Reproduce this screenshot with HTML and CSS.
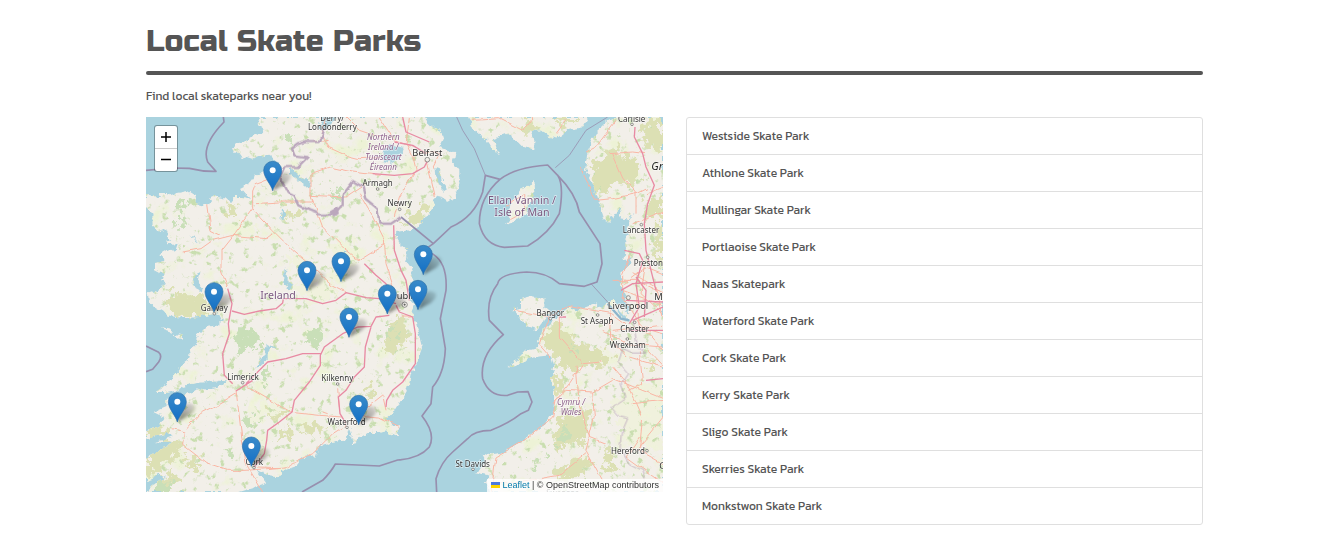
FILE: index.html
```html
<!DOCTYPE html>
<html lang="en">
<head>
<meta charset="utf-8">
<meta name="viewport" content="width=device-width, initial-scale=1">
<title>Local Skate Parks</title>
<link rel="stylesheet" href="styles.css">
</head>
<body>
<main class="page">
  <h1 class="title">Local Skate Parks</h1>
  <hr class="rule">
  <p class="intro">Find local skateparks near you!</p>
  <div class="columns">
    <section class="map" aria-label="Map of skate parks">
      <svg class="map-canvas" viewBox="0 0 1551 1125" preserveAspectRatio="xMidYMid slice">
        <defs>
          <filter id="coast" x="0" y="0" width="1551" height="1125" filterUnits="userSpaceOnUse" color-interpolation-filters="sRGB">
            <feTurbulence type="fractalNoise" baseFrequency="0.05" numOctaves="3" seed="4"/>
            <feDisplacementMap in="SourceGraphic" scale="22" xChannelSelector="R" yChannelSelector="G"/>
          </filter>
          <filter id="wiggle" x="0" y="0" width="1551" height="1125" filterUnits="userSpaceOnUse" color-interpolation-filters="sRGB">
            <feTurbulence type="fractalNoise" baseFrequency="0.025" numOctaves="2" seed="4"/>
            <feDisplacementMap in="SourceGraphic" scale="16" xChannelSelector="R" yChannelSelector="G"/>
          </filter>
          <filter id="rough" x="0" y="0" width="1551" height="1125" filterUnits="userSpaceOnUse" color-interpolation-filters="sRGB">
            <feTurbulence type="fractalNoise" baseFrequency="0.04" numOctaves="4" seed="9"/>
            <feDisplacementMap in="SourceGraphic" scale="75" xChannelSelector="R" yChannelSelector="G"/>
          </filter>
          <filter id="specks" x="0" y="0" width="1551" height="1125" filterUnits="userSpaceOnUse" color-interpolation-filters="sRGB">
            <feTurbulence type="fractalNoise" baseFrequency="0.045" numOctaves="4" seed="12"/>
            <feColorMatrix values="0 0 0 0 .79  0 0 0 0 .87  0 0 0 0 .69  7 0 0 0 -4.3"/>
          </filter>
          <filter id="fields" x="0" y="0" width="1551" height="1125" filterUnits="userSpaceOnUse" color-interpolation-filters="sRGB">
            <feTurbulence type="fractalNoise" baseFrequency="0.016" numOctaves="5" seed="31"/>
            <feColorMatrix values="0 0 0 0 .93  0 0 0 0 .95  0 0 0 0 .84  0 5 0 0 -2.9"/>
          </filter>
          <filter id="blur"><feGaussianBlur stdDeviation="5"/></filter>
          <linearGradient id="pin-fill" x1="0" y1="0" x2="0" y2="1"><stop offset="0" stop-color="#3a8bc9"/><stop offset="1" stop-color="#126fc6"/></linearGradient>
          <linearGradient id="shade" x1="0" y1="1" x2="1" y2="0"><stop offset="0" stop-opacity=".5"/><stop offset="1" stop-opacity=".08"/></linearGradient>
          <g id="pin">
            <path class="pin-shadow" d="M0 0 L14 -42 Q34 -64 52 -50 Q60 -38 38 -20Z"/>
            <path class="pin-body" d="M0 0C-4 -18 -27 -39 -27 -61A27 27 0 0 1 27 -61C27 -39 4 -18 0 0Z"/>
            <circle class="pin-hole" cy="-61" r="9"/>
          </g>
          <g id="land-shapes">
            <path d="M340 0L335 25 355 40 325 55 300 68 275 75 258 95 275 115 300 122 318 128 335 118 362 112 385 125 400 140 385 160 350 165 325 180 310 200 285 213 300 230 315 245 290 240 262 240 255 258 240 245 215 240 200 235 190 262 165 262 150 258 145 235 125 222 95 228 75 238 60 225 40 225 45 245 30 235 0 235V270L20 290 20 325 40 345 60 335 75 375 60 370 70 385 95 380 90 395 70 405 55 400 40 412 60 430 30 438 30 460 50 470 45 490 60 500 35 520 5 530 10 560 35 575 60 590 90 600 120 603 160 600 205 590 235 605 215 625 180 630 160 650 150 680 130 700 135 720 115 735 100 760 85 775 70 795 50 810 25 828 60 828 95 820 120 805 150 798 190 795 215 788 240 790 232 800 215 812 190 818 160 815 140 828 100 840 60 850 62 870 25 885 55 900 40 920 45 930 20 935 0 940V965L60 950 80 958 60 965 20 972 75 975 60 990 10 1015 0 1030V1095L40 1070 60 1080 20 1105 0 1125H280L330 1110 360 1100 345 1080 330 1058 365 1075 400 1078 420 1055 450 1045 470 1020 510 1015 520 985 570 975 600 965 613 950 622 985 640 960 665 945 700 945 720 940 760 958 755 940 760 925 735 925 725 905 740 890 765 850 785 815 795 770 812 735 828 690 815 640 805 600 795 580 805 560 790 545 795 500 800 460 778 430 785 400 760 380 750 345 790 340 830 315 855 280 865 250 885 235 900 258 925 240 940 200 940 160 920 135 925 110 895 95 880 90 890 70 880 40 865 35 845 15 835 0Z"/>
            <path d="M968 0L985 40 1020 70 1035 90 1050 110 1058 108 1050 80 1040 65 1080 50 1110 70 1130 90 1165 97 1165 70 1150 45 1180 40 1200 55 1230 65 1250 50 1270 35 1310 28 1325 0Z"/>
            <path d="M1405 0L1380 15 1345 50 1325 100 1318 155 1345 210 1360 260 1374 300 1365 285 1385 320 1410 285 1430 268 1420 300 1450 305 1462 285 1445 330 1450 350 1435 365 1440 390 1435 430 1460 425 1430 460 1425 510 1440 540 1450 590 1430 570 1400 550 1370 570 1345 560 1290 580 1265 570 1230 600 1190 640 1175 690 1140 700 1100 740 1085 752 1115 745 1165 720 1215 715 1225 750 1215 790 1230 840 1225 880 1200 920 1160 950 1100 990 1065 1010 1035 1015 1010 1010 1020 1030 1000 1060 985 1065 1030 1075 1020 1095 1030 1125H1551V0Z"/>
            <path d="M1125 545L1155 538 1195 542 1195 570 1218 590 1190 605 1195 610 1170 640 1145 630 1125 605 1100 580 1125 575Z"/>
            <path d="M1165 195L1168 225 1150 260 1140 290 1110 310 1075 320 1090 300 1095 260 1125 215Z"/>
            <path d="M46 630L70 635 78 645 50 636ZM85 650L104 655 112 668 96 664Z"/>
          </g>
          <mask id="land-mask" maskUnits="userSpaceOnUse" x="0" y="0" width="1551" height="1125"><use href="#land-shapes" fill="#fff" filter="url(#coast)"/></mask>
        </defs>

        <rect class="sea" width="1551" height="1125"/>
        <use class="land" href="#land-shapes" filter="url(#coast)"/>
        <g mask="url(#land-mask)">
          <rect width="1551" height="1125" filter="url(#fields)"/>
          <g class="meadow" filter="url(#rough)">
            <path d="M440 500L530 490 580 515 560 550 480 550ZM560 380L620 370 660 400 620 450 560 420ZM320 860L400 850 420 870 350 910 300 895ZM420 410L500 420 490 460 430 440ZM270 330L330 325 320 360 280 360ZM1480 800L1551 790V1000L1490 1000 1440 980 1390 850Z"/>
          </g>
          <rect width="1551" height="1125" filter="url(#specks)"/>
          <g class="heath" filter="url(#rough)">
            <path d="M50 540L90 520 130 545 165 530 195 560 170 600 110 600 60 575ZM730 610L775 595 788 640 770 690 740 720 710 690ZM790 290L835 265 857 280 830 310 790 315 765 330ZM0 1020L60 975 110 970 90 1015 30 1060 0 1070ZM130 1010L155 1020 150 1060 120 1050ZM0 945L70 930 60 955 0 965ZM370 885L430 880 425 905 370 900ZM470 920L540 930 520 955 460 945ZM250 265L275 270 262 300 245 295ZM400 245L430 258 420 270 390 260ZM425 280L455 285 440 305 420 300ZM660 800L685 795 670 835 655 840ZM400 930L430 925 430 960 395 970ZM20 1095L90 1060 80 1100 30 1125Z"/>
            <path d="M1385 90L1425 80 1420 115 1475 130 1480 180 1440 205 1400 200 1360 245 1335 215 1340 170 1325 140 1380 130ZM1490 20L1551 0V100L1500 85ZM1510 230L1551 250V310L1500 290ZM1130 20L1170 10 1160 40 1130 35ZM1225 0H1290L1265 25 1235 20ZM1205 630L1240 610 1290 680 1340 690 1400 710 1370 755 1320 740 1290 765 1250 760 1210 700 1190 670ZM1225 760L1260 780 1250 830 1220 830ZM1250 900L1320 870 1330 930 1310 990 1260 980 1240 1000 1220 960ZM1250 1045L1310 1020 1340 1040 1300 1080 1220 1090ZM1370 1000L1400 1010 1410 1050 1380 1060ZM1530 320L1551 310V450L1525 410ZM1500 720L1530 740 1510 765Z"/>
          </g>
          <g class="wood" filter="url(#rough)">
            <path d="M270 640L330 640 350 680 320 700 265 690ZM480 640L520 625 540 660 500 690 475 670ZM720 620L750 625 745 650 720 655ZM290 905L330 900 330 920 295 925ZM100 245L130 250 110 275 85 265ZM210 105L230 110 225 130 205 125ZM90 290L110 290 120 320 90 320ZM560 215L600 225 570 250ZM230 1000L265 1000 260 1015 230 1015ZM350 755L375 770 360 795 345 780ZM1250 930L1275 945 1265 975 1235 975ZM1160 1025L1200 1015 1190 1040 1155 1045ZM1270 685L1295 690 1285 720ZM590 560L650 580 600 600ZM30 1100L80 1085 60 1125H20ZM420 50L450 60 430 90ZM1390 650L1410 660 1400 680Z"/>
          </g>
        </g>
        <g class="sea" filter="url(#coast)">
          <path d="M715 92L735 85 770 95 765 120 735 140 710 135ZM435 150L452 165 455 178 485 185 492 215 478 205 455 185 435 175ZM868 150L882 160 888 195 905 215 890 225 872 185ZM150 470L160 465 155 495 175 515 165 523 140 510ZM415 455L425 465 425 495 445 505 430 522 415 500ZM362 680L382 690 365 705 365 730 340 750 325 752 345 735 355 705ZM405 275L415 285 412 308 402 300ZM530 0H570L545 30 525 45 520 20ZM130 355L145 360 165 385 150 370ZM590 405L605 402 600 415ZM1405 565L1450 610 1430 610ZM605 955L612 930 620 960Z"/>
        </g>

        <g class="road minor" filter="url(#wiggle)">
          <path d="M535 0L525 55 545 90 600 115 640 125 700 122M500 75L545 70M495 235L495 170 550 150 620 165 700 175M330 260L400 255 500 255 495 235 600 240 660 200M495 235L530 330 590 390 640 430M320 275V225L330 200 400 175M320 275L380 340 440 400 500 450 560 505 600 525M320 275L265 350 225 400 225 460 245 510M110 405L165 395 200 370 260 355 360 365 380 350M185 265L195 340 225 355M640 430L720 380M640 230L680 300 715 370 720 440 740 500 745 550M790 0L780 80 800 120 830 105 880 110 860 150M800 120L810 160 760 240 745 300M840 130L865 240M700 0L745 70 800 90M600 0L640 40 700 60"/>
          <path d="M270 820L280 900 287 960 300 1040M300 805L360 840 430 885 520 895 590 900M80 935L115 945 110 985 180 1040 240 1060 300 1060 420 1050 500 1010 560 950 600 925M120 935L160 890 220 860 270 830M640 890L710 835 720 880M640 895L700 900 760 930M300 1040L350 1125M330 1050L400 1052M530 885L545 890M800 600L770 600M575 820L580 870"/>
          <path d="M1105 580L1160 590 1210 600 1265 565 1330 578 1400 590 1440 620M1210 600L1180 680 1215 720M1240 600L1240 660 1310 740 1370 735M1310 740L1270 800 1230 850 1220 900 1150 960 1050 1020 1035 1125M1220 860L1260 820 1340 825 1400 790M1340 825L1345 900 1320 1000 1370 1090M1290 740L1300 870 1330 960 1380 980M1035 1100L1150 1090 1240 1075 1320 1010M1400 750L1450 810 1490 900 1480 1000 1551 1040M1320 105L1350 90 1410 10M1300 150L1330 210 1345 250 1400 245 1470 230 1500 215M1390 110L1460 105 1500 110M1430 180L1470 230 1470 290M1400 110L1430 180M980 10L1060 5 1130 40 1160 0M1230 50L1260 10M1450 420L1430 470 1430 540 1480 620 1551 700M1460 470L1530 510 1551 600M1435 500L1500 450 1551 470M1450 720L1551 750M1395 580L1390 660 1440 720M1080 265L1140 230 1135 280 1090 305"/>
          <path d="M1400 490L1470 490 1551 530M1430 520L1551 565M1470 530L1480 630 1551 650M1500 430L1485 530 1551 590M1400 640L1551 625M1370 640L1440 680 1551 690M1480 700L1490 800 1450 820M1390 780L1551 845M1460 860L1551 850M1470 1000L1551 900M1480 960L1440 1020 1551 1100M1500 230L1551 210M1460 320L1551 285M1510 700L1551 745"/>
        </g>
        <g class="road major">
          <path d="M245 515L258 560 247 620 250 650 230 710 235 775 260 800M258 582L295 592 340 582 390 575 410 558 412 545 480 545 530 560 570 550 600 527 660 542 700 545 750 560M750 565L760 585 800 600 808 650 808 740 770 795 740 820 722 850 720 870M655 440L690 475 720 500 740 555M743 325L745 400 765 460 780 490 790 550M300 800L365 735 420 725 470 710 525 710M320 790L270 822M730 595L690 600 675 628 635 630 590 650 535 690 523 715 523 745 490 795 445 850 438 885 400 915 365 940 362 970 355 1010 325 1050M675 630L658 690 655 750 625 780 600 820 577 840 582 890 600 920M680 170L745 175 800 170 835 150 845 130M745 75L800 85 840 110M770 0L780 45 850 75"/>
          <path d="M1467 30L1465 60 1490 110 1500 150 1525 205 1505 260 1495 320 1500 400 1510 440M1435 400L1480 410 1490 430 1470 500 1480 570 1450 620M1425 520L1460 500 1551 495M1440 550L1551 555M1460 610L1551 570M1450 640L1551 640M1510 440L1530 520M1500 790L1551 785M1470 480L1500 520 1495 600M1240 600L1260 600"/>
        </g>
        <path class="river" d="M1385 560L1425 605 1450 610"/>
        <g class="border thick" filter="url(#wiggle)">
          <path d="M535 30L518 75 480 75 455 82 438 95 445 115 485 120 455 150 420 150 403 185 425 225 445 235 460 265 490 280 520 292 565 293 590 265 590 230 620 192 650 210 658 245 695 275 700 320 735 320 765 300"/>
          <path class="border-blob" d="M555 285L572 275 575 292 560 298Z"/>
          <path class="thin" d="M1460 610L1475 690 1500 705 1450 705 1430 695 1415 735 1445 770 1425 800 1440 840 1395 870 1420 900 1445 905 1430 940 1425 1000 1450 1040 1490 1060 1500 1090"/>
        </g>
        <g class="border">
          <path d="M232 0L234 15Q165 85 185 135L210 163Q170 164 130 154L80 153 0 160M0 687L38 706Q50 716 38 735L20 757 0 764M765 300L862 380 915 330Q985 300 1010 225L1018 175 1062 187Q1110 150 1205 144L1235 175Q1290 230 1300 285L1362 380 1368 440 1353 495 1315 508 1240 500Q1200 465 1142 465 1060 470 1055 500 1020 545 1030 610L1072 653Q1000 715 1010 785 1030 840 1085 835L1115 825 1146 824 1158 855 1147 880 1125 890Q1090 918 1035 940 985 940 965 965L920 1005Q885 1035 870 1085L872 1125M862 380L833 400 862 412Q905 440 900 520L883 605 898 695Q895 770 860 810L855 860 828 897Q870 950 850 990 820 1025 755 1029L700 1047 568 1041Q555 1065 530 1090L468 1125M1062 187Q1000 240 1000 320 1015 385 1075 391L1145 387Q1210 350 1240 290 1255 205 1235 175"/>
          <path class="thin" d="M932 0L950 40 985 95 1018 175M1228 152L1270 115 1300 70 1320 40 1385 0M1335 500L1385 555"/>
        </g>

        <g class="towns">
          <circle cx="844" cy="128" r="7"/><circle cx="695" cy="216" r="4"/><circle cx="761" cy="277" r="4"/><circle cx="205" cy="590" r="4"/><circle cx="290" cy="797" r="4"/><circle cx="575" cy="801" r="4"/><circle cx="603" cy="931" r="4"/><circle cx="324" cy="1052" r="4"/><circle cx="981" cy="1057" r="4"/><circle cx="1213" cy="605" r="4"/><circle cx="1355" cy="594" r="4"/><circle cx="1447" cy="542" r="6"/><circle cx="1466" cy="616" r="4"/><circle cx="1444" cy="666" r="4"/><circle cx="1505" cy="421" r="4"/><circle cx="1486" cy="323" r="4"/><circle cx="1458" cy="22" r="4"/><circle cx="1503" cy="1001" r="4"/>
          <circle cx="776" cy="563" r="8"/><circle class="dot" cx="776" cy="563" r="2"/>
        </g>
        <g class="label">
          <text x="559" y="12">Derry/</text><text x="559" y="40">Londonderry</text>
          <text x="695" y="208">Armagh</text><text x="761" y="268">Newry</text>
          <text x="205" y="581">Galway</text><text x="291" y="790">Limerick</text>
          <text x="574" y="793">Kilkenny</text><text x="602" y="924">Waterford</text>
          <text x="325" y="1045">Cork</text><text x="980" y="1050">St Davids</text>
          <text x="1213" y="597">Bangor</text><text x="1353" y="622">St Asaph</text>
          <text x="1466" y="645">Chester</text><text x="1445" y="692">Wrexham</text>
          <text x="1507" y="448">Preston</text><text x="1485" y="347">Lancaster</text>
          <text x="1457" y="15">Carlisle</text><text x="1446" y="1010">Hereford</text>
          <text x="1250" y="1136">Swansea</text>
          <g class="city"><text x="844" y="118">Belfast</text><text x="775" y="547">Dublin</text><text x="1446" y="576">Liverpool</text><text class="start" x="1525" y="549">Manchester</text><text class="start" x="1540" y="1056">Gloucester</text></g>
          <g class="region"><text x="712" y="68">Northern</text><text x="712" y="98">Ireland /</text><text x="712" y="128">Tuaisceart</text><text x="712" y="158">Éireann</text><text x="1275" y="864">Cymru /</text><text x="1275" y="893">Wales</text></g>
          <g class="country"><text x="396" y="547">Ireland</text><text x="1128" y="261">Ellan Vannin /</text><text x="1128" y="298">Isle of Man</text></g>
          <text class="nation start" x="1516" y="160">Great Britain</text>
        </g>
        <use href="#pin" x="380" y="221"/><use href="#pin" x="832" y="473"/><use href="#pin" x="585" y="494"/><use href="#pin" x="483" y="521"/><use href="#pin" x="816" y="578"/><use href="#pin" x="204" y="585"/><use href="#pin" x="724" y="591"/><use href="#pin" x="609" y="661"/><use href="#pin" x="94" y="915"/><use href="#pin" x="638" y="923"/><use href="#pin" x="316" y="1048"/>
      </svg>
      <div class="zoom-control">
        <button class="zoom-button" type="button" aria-label="Zoom in"><svg class="zoom-icon" viewBox="0 0 10 10"><path d="M5 0V10M0 5H10"/></svg></button>
        <button class="zoom-button" type="button" aria-label="Zoom out"><svg class="zoom-icon" viewBox="0 0 10 10"><path d="M0 4.5H10"/></svg></button>
      </div>
      <div class="attribution">
        <a class="leaflet" href="#"><svg class="flag" viewBox="0 0 9 6"><path fill="#4c7be1" d="M0 0H9V3H0Z"/><path fill="#ffd500" d="M0 3H9V6H0Z"/></svg> Leaflet</a> | © OpenStreetMap contributors
      </div>
    </section>
    <ul class="parks">
      <li class="park">Westside Skate Park</li>
      <li class="park">Athlone Skate Park</li>
      <li class="park">Mullingar Skate Park</li>
      <li class="park">Portlaoise Skate Park</li>
      <li class="park">Naas Skatepark</li>
      <li class="park">Waterford Skate Park</li>
      <li class="park">Cork Skate Park</li>
      <li class="park">Kerry Skate Park</li>
      <li class="park">Sligo Skate Park</li>
      <li class="park">Skerries Skate Park</li>
      <li class="park">Monkstwon Skate Park</li>
    </ul>
  </div>
</main>
</body>
</html>
```
FILE: styles.css
```css
* { box-sizing: border-box; }
body {
  margin: 0;
  background: #fff;
  color: #555;
  font: 400 12px/20px Kanit, "Noto Sans", sans-serif;
}
.page { padding: 21px 135px 10px 146px; }
.title {
  margin: 0 0 10px;
  color: #555;
  font: 500 30px/40px "Russo One", Inter, sans-serif;
}
.rule { height: 4px; margin: 0; border: 0; border-radius: 2px; background: #555; }
.intro { margin: 11px 0; }
.columns {
  display: grid;
  grid-template-columns: 1fr 1fr;
  gap: 23px;
  align-items: start;
}
.map { position: relative; height: 375px; overflow: hidden; background: #aad3df; }
.map-canvas { display: block; width: 100%; height: 100%; }

.sea { fill: #aad3df; }
.land { fill: #f2efe9; }
.heath { fill: #dce0b4; }
.wood { fill: #c9dfb8; }
.meadow { fill: #eff3d8; opacity: .7; }
.road { fill: none; stroke-linejoin: round; }
.minor { stroke: #f9b6a4; stroke-width: 3; }
.major { stroke: #e88aa3; stroke-width: 4; }
.river { fill: none; stroke: #8db5cc; stroke-width: 7; }
.border { fill: none; stroke: #978fae; stroke-width: 5; stroke-linejoin: round; }
.border.thick { stroke: #bba7bd; stroke-width: 7; }
.border .thin { stroke-width: 3; opacity: .8; }
.border-blob { fill: #bba7bd; }
.towns { fill: #f2efe9; stroke: #666; stroke-width: 2; }
.towns .dot { fill: #444; }

.label {
  font: 24px "Noto Sans", sans-serif;
  fill: #333;
  stroke: rgba(255, 255, 255, .6);
  stroke-width: 4px;
  paint-order: stroke;
  text-anchor: middle;
}
.city { font-size: 28px; }
.region { font-style: italic; fill: #8d618b; }
.country { font-size: 32px; fill: #7a5880; }
.nation { font-size: 33px; font-style: italic; fill: #222; }
.start { text-anchor: start; }

.pin-shadow { fill: url(#shade); filter: url(#blur); }
.pin-body { fill: url(#pin-fill); stroke: #2e6fa8; stroke-width: 2; }
.pin-hole { fill: #fff; }

.zoom-control {
  position: absolute;
  top: 8px;
  left: 8px;
  display: grid;
  border: 1px solid rgba(0, 0, 0, .3);
  border-radius: 3px;
  background: #fff;
  background-clip: padding-box;
}
.zoom-button {
  display: grid;
  place-items: center;
  width: 22px;
  height: 22px;
  padding: 0;
  border: 0;
  background: none;
}
.zoom-button + .zoom-button { height: 23px; border-top: 1px solid #ccc; }
.zoom-icon { width: 10px; height: 10px; fill: none; stroke: #000; stroke-width: 1.5; }
.attribution {
  position: absolute;
  right: 0;
  bottom: 0;
  padding: 0 4px;
  background: rgba(255, 255, 255, .8);
  color: #333;
  font: 9px/13px "Liberation Sans", Arial, sans-serif;
  white-space: nowrap;
}
.leaflet { color: #0078a8; text-decoration: none; }
.flag { width: 9px; height: 6px; }

.parks {
  margin: 0;
  padding: 0;
  list-style: none;
  border: 1px solid #dfdfdf;
  border-radius: 3px;
}
.park { padding: 8px 15px; }
.park + .park { border-top: 1px solid #dfdfdf; }
```
